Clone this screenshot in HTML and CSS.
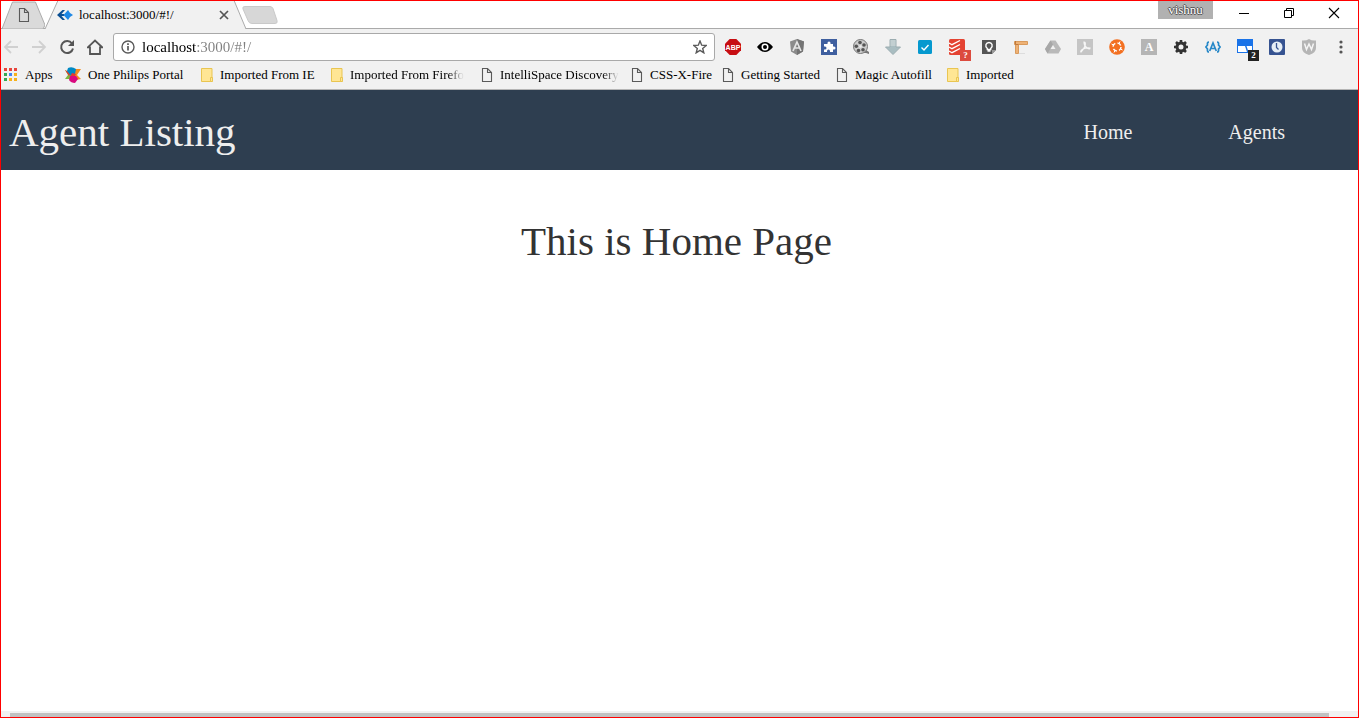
FILE: index.html
```html
<!DOCTYPE html>
<html lang="en">
<head>
<meta charset="utf-8">
<title>Agent Listing</title>
<link rel="stylesheet" href="styles.css">
</head>
<body>
<svg class="defs" aria-hidden="true">
  <symbol id="page" viewBox="0 0 12 14"><path d="M1.5.5h5l4 4v9h-9zM6.500 .5v4h4" fill="none" stroke="#5a5a5a" stroke-width="1.100"/></symbol>
  <symbol id="folder" viewBox="0 0 12 14"><path d="M.5.500h10.500v13h-10.500z" fill="#ffe694" stroke="#e9c551"/><path d="M9.500 9.500h2v4h-2z" fill="#ffe694" stroke="#e9c551"/></symbol>
</svg>
<div class="window">
  <header class="tabstrip">
    <button class="tab tab-pinned" aria-label="Pinned tab">
      <svg class="tab-shape" viewBox="0 0 46 28" preserveAspectRatio="none"><path d="M1 28L12 1H36L46 24L44 28z" fill="#dadada" stroke="#aaa"/></svg>
      <svg class="icon-page" viewBox="0 0 12 14"><use href="#page"/></svg>
    </button>
    <div class="tab tab-active">
      <svg class="tab-shape" viewBox="0 0 206 28" preserveAspectRatio="none"><path d="M0 28L13 0H193L205 28z" fill="#f1f1f1"/><path d="M0 28L13 0M193 0L205 28" fill="none" stroke="#aaa"/></svg>
      <svg class="favicon" viewBox="0 0 16 12"><path d="M5.500 1H8L4.500 5H7v2H4.500L8 11H5.500L0 6z" fill="#0b4f93"/><path d="M11 1l2 3 3 2-3 2-2 3-4.500-5z" fill="#1e88e5"/></svg>
      <span class="tab-title">localhost:3000/#!/</span>
      <button class="tab-close" aria-label="Close tab"><svg viewBox="0 0 10 10"><path d="M1 1l8 8M9 1L1 9" stroke="#555" stroke-width="1.700"/></svg></button>
    </div>
    <button class="new-tab" aria-label="New tab"><svg viewBox="0 0 36 18"><path d="M3 .5h25q2 0 3 2l4 12q1 3-2 3H10q-3 0-4-3L1 3Q0 .5 3 .5z" fill="#d7d7d7" stroke="#c9c9c9"/></svg></button>
    <div class="window-controls">
      <button class="user">vishnu</button>
      <button class="control" aria-label="Minimize"><svg viewBox="0 0 12 12"><path d="M1 6.500h10" stroke="#000"/></svg></button>
      <button class="control" aria-label="Restore"><svg viewBox="0 0 12 12"><path d="M1.500 3.500h7v7h-7zM3.500 3.500v-2h7v7h-2" fill="none" stroke="#000"/></svg></button>
      <button class="control" aria-label="Close"><svg viewBox="0 0 12 12"><path d="M1 1l10 10M11 1L1 11" stroke="#000" stroke-width="1.100"/></svg></button>
    </div>
  </header>

  <div class="toolbar">
    <div class="nav-buttons">
      <button aria-label="Back"><svg viewBox="0 0 16 16"><path d="M15 8H2M8 2L2 8l6 6" fill="none" stroke="#d0d0d0" stroke-width="1.800"/></svg></button>
      <button aria-label="Forward"><svg viewBox="0 0 16 16"><path d="M1 8h13M8 2l6 6-6 6" fill="none" stroke="#d0d0d0" stroke-width="1.800"/></svg></button>
      <button aria-label="Reload"><svg viewBox="0 0 16 16"><path d="M13 4.500A6 6 0 1 0 14 9.500" fill="none" stroke="#555" stroke-width="2"/><path d="M15 1v6H9z" fill="#555"/></svg></button>
      <button aria-label="Home page"><svg viewBox="0 0 16 16"><path d="M.8 8.300L8 1.500l7.200 6.800H13V15H3V8.300z" fill="none" stroke="#555" stroke-width="1.800"/></svg></button>
    </div>
    <form class="address">
      <svg class="info" viewBox="0 0 14 14"><circle cx="7" cy="7" r="6" fill="none" stroke="#5a5a5a" stroke-width="1.400"/><path d="M7 6v4.500M7 3.300v1.600" stroke="#5a5a5a" stroke-width="1.700"/></svg>
      <input type="text" aria-label="Address" value="localhost:3000/#!/">
      <button type="button" aria-label="Bookmark this page"><svg viewBox="0 0 14 14"><path d="M7 1l1.700 4.200 4.500.3-3.500 2.900 1.100 4.400L7 10.400l-3.800 2.400 1.100-4.400L.8 5.500l4.500-.3z" fill="none" stroke="#5a5a5a" stroke-width="1.400"/></svg></button>
    </form>
    <div class="extensions">
      <button aria-label="Ad blocker"><svg viewBox="0 0 16 16"><path d="M4.700 0h6.600L16 4.700v6.600L11.300 16H4.700L0 11.300V4.700z" fill="#c70d12"/><text x="8" y="10.700" class="abp">ABP</text></svg></button>
      <button aria-label="Viewer"><svg viewBox="0 0 16 16"><path d="M0 8q8-10 16 0-8 10-16 0z"/><circle cx="8" cy="8" r="3.500" fill="#fff"/><circle cx="8" cy="8" r="2"/></svg></button>
      <button aria-label="Angular"><svg viewBox="0 0 16 16"><path d="M8 0l7 2.500-1 10L8 16l-6-3.500-1-10z" fill="#8b8b8b"/><path d="M8 0l7 2.500-1 10L8 16z" fill="#747474"/><path d="M4 12l4-9 4 9M5.500 9h5" fill="none" stroke="#e4e4e4" stroke-width="1.700"/></svg></button>
      <button aria-label="Extension manager"><svg viewBox="0 0 16 16"><path d="M0 0h16v16H0z" fill="#3f5f9f"/><path d="M3 5h3.500V4a1.500 1.500 0 1 1 3 0v1H12v2.500h1a1.500 1.500 0 0 1 0 3h-1V13H9v-1a1.500 1.500 0 0 0-3 0v1H3v-2.500h1a1.500 1.500 0 0 0 0-3H3z" fill="#fff"/></svg></button>
      <button aria-label="Film reel"><svg viewBox="0 0 16 16"><path d="M7 14h6l3 1v-2l-3-2" fill="#777"/><circle cx="7.500" cy="7.500" r="7" fill="#ccc" stroke="#777"/><g fill="#555"><circle cx="7" cy="3.500" r="1.800"/><circle cx="11" cy="6" r="1.800"/><circle cx="10" cy="10.700" r="1.800"/><circle cx="5.500" cy="11.500" r="1.800"/><circle cx="3.300" cy="7.200" r="1.800"/></g><circle cx="7.500" cy="7.500" r="1.200" fill="#eee"/></svg></button>
      <button aria-label="Downloads"><svg viewBox="0 0 16 16"><path d="M5 .5h6V8h4.500L8 15.500.5 8H5z" fill="#a9bdc1" stroke="#9bacb0"/><path d="M5.500 1h5v6h-5z" fill="#c2cfd1"/></svg></button>
      <button aria-label="Tasks"><svg viewBox="0 0 16 16"><rect x="1" y="1" width="14" height="14" rx="1.500" fill="#0599cf"/><path d="M4.500 8.500L7 11l4.500-5" fill="none" stroke="#fff" stroke-width="1.400"/></svg></button>
      <button aria-label="Todoist, unknown count"><svg viewBox="0 0 16 16"><rect width="16" height="16" rx="1.500" fill="#e44332"/><path d="M0 4l3 1.700L11 1.500M0 8l3 1.700L11 5.500M0 12l3 1.700L11 9.500" fill="none" stroke="#fff" stroke-width="1.300"/></svg><span class="badge badge-red">?</span></button>
      <button aria-label="Keep"><svg viewBox="0 0 16 16"><path d="M1 1h14v10l-4 4H1z" fill="#555"/><path d="M11 15v-4h4z" fill="#999"/><path d="M6.300 9.500C3.500 7 5 3.500 8 3.500s4.500 3.500 1.700 6v1H6.300zM6.500 12h3" fill="none" stroke="#fff" stroke-width="1.400"/></svg></button>
      <button aria-label="Page ruler"><svg viewBox="0 0 16 16"><path d="M1.500 2.500h13v3h-9v9h-3v-9h-1z" fill="#eeb276" stroke="#d99a5c"/><path d="M2.500 2v3.500h3" fill="none" stroke="#b56b2b" stroke-width=".8"/><path d="M6 14.500h6" stroke="#ddd"/></svg></button>
      <button aria-label="Drive"><svg viewBox="0 0 16 16"><path d="M5.500 1.500h5L16 10l-2.500 4.500h-11L0 10z" fill="#b9b9b9"/><path d="M5.500 1.500L0 10l2.500 4.500L8 5.500z" fill="#a7a7a7"/><path d="M8 6l2.500 4h-5z" fill="#f1f1f1"/></svg></button>
      <button aria-label="PDF"><svg viewBox="0 0 16 16"><path d="M0 0h16v16H0z" fill="#c5c5c5"/><path d="M7 3q2 0 1 4-1 3-4 6-1-1 2-3 3-1.500 7-1 0 2-3 0-3-2-3-6z" fill="none" stroke="#f7f7f7" stroke-width="1.200"/></svg></button>
      <button aria-label="Help"><svg viewBox="0 0 16 16"><circle cx="8" cy="8" r="7.800" fill="#f37021"/><circle cx="8" cy="8" r="4" fill="none" stroke="#fff" stroke-width="1.500" stroke-dasharray="4 2.300"/><path d="M2.500 5l2 1M11 2.500l-1 2M13.500 11l-2-1M5 13.500l1-2" stroke="#fff"/></svg></button>
      <button aria-label="Letter A"><svg viewBox="0 0 16 16"><path d="M0 0h16v16H0z" fill="#b5b5b5"/><text x="8" y="12" class="letter">A</text></svg></button>
      <button aria-label="Settings"><svg viewBox="0 0 16 16"><circle cx="8" cy="8" r="4" fill="none" stroke="#333" stroke-width="3"/><path d="M8 1v3M8 12v3M1 8h3M12 8h3M3 3l2 2M11 11l2 2M13 3l-2 2M5 11l-2 2" stroke="#333" stroke-width="2.600"/></svg></button>
      <button aria-label="Angle tools"><svg viewBox="0 0 16 16"><path d="M4 3Q2 3 2.500 6L.8 8l1.700 2Q2 13 4 13M12 3q2 0 1.500 3l1.700 2-1.700 2q.5 3-1.500 3M4.700 12L8 4l3.300 8M6 9.500h4" fill="none" stroke="#2788c8" stroke-width="1.700"/></svg></button>
      <button aria-label="Tabs, 2"><svg viewBox="0 0 16 16"><path d="M0 0h16v14H0z" fill="#1a73e8"/><path d="M1 7h7l2 6H1zM9.500 7H15v6h-3.500z" fill="#fff"/></svg><span class="badge badge-black">2</span></button>
      <button aria-label="History"><svg viewBox="0 0 16 16"><rect width="16" height="16" rx="1" fill="#365391"/><circle cx="8" cy="8" r="5.500" fill="#e6eef6"/><path d="M7.500 4v4.500l2 2" fill="none" stroke="#365391" stroke-width="1.300"/></svg></button>
      <button aria-label="W shield"><svg viewBox="0 0 16 16"><path d="M8 0q3 2 7 1.500V9q0 5-7 7-7-2-7-7V1.500Q5 2 8 0z" fill="#b5b5b5"/><path d="M3.500 4.500l2 6L8 5l2.500 5.500 2-6" fill="none" stroke="#f5f5f5" stroke-width="1.500"/></svg></button>
      <button aria-label="Menu"><svg viewBox="0 0 16 16"><g fill="#555"><circle cx="8" cy="3" r="1.600"/><circle cx="8" cy="8" r="1.600"/><circle cx="8" cy="13" r="1.600"/></g></svg></button>
    </div>
  </div>

  <nav class="bookmarks" aria-label="Bookmarks">
    <a href="#apps"><svg class="icon-apps" viewBox="0 0 14 14"><path d="M0 0h3v3H0zM5 0h3v3H5zM10 0h3v3h-3z" fill="#e8453c"/><path d="M0 5h3v3H0z" fill="#34a853"/><path d="M5 5h3v3H5z" fill="#4285f4"/><path d="M10 5h3v3h-3zM5 10h3v3H5zM10 10h3v3h-3z" fill="#f7b21a"/><path d="M0 10h3v3H0z" fill="#34a853"/></svg><span>Apps</span></a>
    <a href="#portal"><svg class="icon-portal" viewBox="0 0 16 16"><path d="M10 2h6l-4 6 4 4-5 1-5-4z" fill="#f28c1e"/><path d="M0 3l7 4-2 5H0l3-4z" fill="#7cb83e"/><path d="M0 3l6 3-2 3z" fill="#e33b2e"/><path d="M3 1q4-2 8 1l-1 5-4 2-4-5z" fill="#0089c4"/><path d="M7 6l4 1-2 4-4-1z" fill="#e33b2e"/><path d="M5 9l6 0 2 3-3 4q-4 0-6-3z" fill="#d9097f"/></svg><span>One Philips Portal</span></a>
    <a href="#ie"><svg class="icon-page" viewBox="0 0 12 14"><use href="#folder"/></svg><span>Imported From IE</span></a>
    <a href="#firefox"><svg class="icon-page" viewBox="0 0 12 14"><use href="#folder"/></svg><span class="fade">Imported From Firefo</span></a>
    <a href="#discovery"><svg class="icon-page" viewBox="0 0 12 14"><use href="#page"/></svg><span class="fade">IntelliSpace Discovery</span></a>
    <a href="#cssx"><svg class="icon-page" viewBox="0 0 12 14"><use href="#page"/></svg><span>CSS-X-Fire</span></a>
    <a href="#start"><svg class="icon-page" viewBox="0 0 12 14"><use href="#page"/></svg><span>Getting Started</span></a>
    <a href="#autofill"><svg class="icon-page" viewBox="0 0 12 14"><use href="#page"/></svg><span>Magic Autofill</span></a>
    <a href="#imported"><svg class="icon-page" viewBox="0 0 12 14"><use href="#folder"/></svg><span>Imported</span></a>
  </nav>

  <div class="site-header">
    <div class="brand">Agent Listing</div>
    <nav class="site-nav" aria-label="Site">
      <a href="#!/">Home</a>
      <a href="#!/agents">Agents</a>
    </nav>
  </div>
  <main class="content"><h1>This is Home Page</h1></main>
  <div class="scrollbar"><div class="thumb"></div></div>
</div>
</body>
</html>
```

FILE: styles.css
```css
* { box-sizing: border-box; }
body {
  margin: 0;
  background: #fff;
  color: #000;
  font-family: "Palatino Linotype", "Liberation Serif", serif;
  font-size: 13px;
}
button {
  padding: 0;
  border: 0;
  background: none;
  color: inherit;
  font: inherit;
}
a { color: inherit; text-decoration: none; }
svg { display: block; flex: none; }
.defs { position: absolute; width: 0; height: 0; }
.window {
  display: flex;
  flex-direction: column;
  min-height: 100vh;
  border: 1px solid #f00;
}

.tabstrip {
  display: flex;
  height: 28px;
  padding-right: 2px;
  border-bottom: 1px solid #aaa;
}
.tab {
  position: relative;
  display: flex;
  align-items: center;
  height: 28px;
}
.tab-shape {
  position: absolute;
  inset: 0;
  width: 100%;
  height: 100%;
}
.tab-pinned { width: 44px; padding-left: 17px; }
.tab-pinned .icon-page { position: relative; }
.tab-active { width: 202px; padding: 0 18px 0 12px; gap: 6px; }
.favicon { position: relative; width: 16px; height: 12px; }
.tab-title { position: relative; flex: 1; }
.tab-close { position: relative; }
.tab-close svg { width: 10px; height: 10px; }
.new-tab { display: flex; align-items: center; margin-left: -5px; }
.new-tab svg { width: 36px; height: 18px; }
.window-controls { display: flex; margin-left: auto; }
.user {
  width: 55px;
  height: 18px;
  margin-right: 8px;
  background: #b1b1b1;
  color: #fff;
  line-height: 16px;
  text-shadow: 1px 0 #555, -1px 0 #555, 0 1px #555, 0 -1px #555;
}
.control { display: flex; align-items: center; justify-content: center; width: 45px; height: 24px; }
.control svg { width: 12px; height: 12px; }

.toolbar {
  display: flex;
  align-items: center;
  height: 36px;
  background: #f1f1f1;
}
.nav-buttons { display: flex; gap: 12px; padding: 0 10px 0 2px; }
.nav-buttons svg { width: 16px; height: 16px; }
.address {
  display: flex;
  flex: 1;
  align-items: center;
  gap: 7px;
  height: 28px;
  padding: 0 7px;
  border: 1px solid #a9a9a9;
  border-radius: 3px;
  background: #fff;
}
.address svg { width: 14px; height: 14px; }
.address input {
  flex: 1;
  min-width: 0;
  padding: 0;
  border: 0;
  outline: 0;
  background: linear-gradient(90deg, #000 55px, #808080 55px);
  -webkit-background-clip: text;
  background-clip: text;
  color: transparent;
  font: inherit;
  font-size: 15px;
}
.extensions { display: flex; padding: 0 1px 0 2px; }
.extensions button {
  position: relative;
  display: flex;
  align-items: center;
  justify-content: center;
  width: 32px;
  height: 28px;
}
.extensions svg { width: 16px; height: 16px; }
.abp { fill: #fff; font: bold 7px "Liberation Sans", sans-serif; text-anchor: middle; }
.letter { fill: #fff; font: bold 12px "Liberation Serif", serif; text-anchor: middle; }
.badge {
  position: absolute;
  right: 2px;
  bottom: 0;
  width: 11px;
  height: 11px;
  color: #fff;
  font: bold 9px/11px "Liberation Serif", serif;
  text-align: center;
}
.badge-red { background: #dc4b3e; }
.badge-black { background: #222; }

.bookmarks {
  display: grid;
  grid-template-columns: 61px 136px 130px 150px 150px 91px 114px 111px 72px;
  height: 25px;
  padding-left: 3px;
  background: #f1f1f1;
  border-bottom: 1px solid #b5b5b5;
}
.bookmarks a { display: flex; align-items: center; gap: 7px; height: 20px; white-space: nowrap; }
.icon-page { width: 12px; height: 14px; }
.icon-apps { width: 14px; height: 14px; }
.icon-portal { width: 16px; height: 16px; }
.fade {
  -webkit-mask-image: linear-gradient(90deg, #000 86%, transparent);
  mask-image: linear-gradient(90deg, #000 86%, transparent);
}

.site-header {
  display: flex;
  align-items: center;
  justify-content: space-between;
  height: 80px;
  padding: 4px 73px 0 8px;
  background: #2e3e50;
  color: #eee;
}
.brand { font-size: 41px; }
.site-nav { display: flex; gap: 96px; font-size: 20px; }
.content { flex: 1; padding: 47px 6px 0 0; text-align: center; }
.content h1 { margin: 0; color: #333; font-size: 41px; font-weight: 400; }
.scrollbar { height: 6px; padding: 2px 29px 0 9px; background: #f1f1f1; }
.thumb { height: 4px; background: #c1c1c1; }
```
